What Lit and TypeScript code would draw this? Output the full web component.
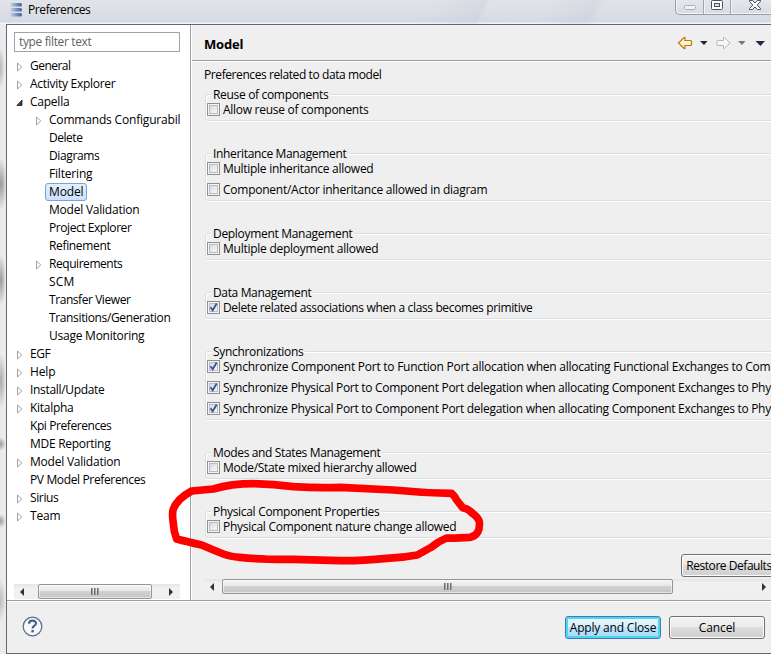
import { LitElement, html, css, svg, nothing } from "lit";
import { customElement, property } from "lit/decorators.js";
import { classMap } from "lit/directives/class-map.js";

type Text = [label: string, width: number];
interface Node { text: Text; arrow?: "closed" | "open"; child?: boolean; selected?: boolean }
interface Group { title: Text; checked: boolean; rows: Text[] }

const tree: Node[] = [
  { text: ["General", 40], arrow: "closed" },
  { text: ["Activity Explorer", 85], arrow: "closed" },
  { text: ["Capella", 39], arrow: "open" },
  { text: ["Commands Configurabil", 131], arrow: "closed", child: true },
  { text: ["Delete", 33], child: true },
  { text: ["Diagrams", 50], child: true },
  { text: ["Filtering", 43], child: true },
  { text: ["Model", 34], child: true, selected: true },
  { text: ["Model Validation", 90], child: true },
  { text: ["Project Explorer", 82], child: true },
  { text: ["Refinement", 61], child: true },
  { text: ["Requirements", 73], arrow: "closed", child: true },
  { text: ["SCM", 25], child: true },
  { text: ["Transfer Viewer", 81], child: true },
  { text: ["Transitions/Generation", 121], child: true },
  { text: ["Usage Monitoring", 95], child: true },
  { text: ["EGF", 20], arrow: "closed" },
  { text: ["Help", 25], arrow: "closed" },
  { text: ["Install/Update", 74], arrow: "closed" },
  { text: ["Kitalpha", 43], arrow: "closed" },
  { text: ["Kpi Preferences", 81] },
  { text: ["MDE Reporting", 80] },
  { text: ["Model Validation", 90], arrow: "closed" },
  { text: ["PV Model Preferences", 115] },
  { text: ["Sirius", 28], arrow: "closed" },
  { text: ["Team", 30], arrow: "closed" },
];

const groups: Group[] = [
  { title: ["Reuse of components", 115], checked: false, rows: [["Allow reuse of components", 145]] },
  {
    title: ["Inheritance Management", 133], checked: false,
    rows: [["Multiple inheritance allowed", 150], ["Component/Actor inheritance allowed in diagram", 264]],
  },
  { title: ["Deployment Management", 139], checked: false, rows: [["Multiple deployment allowed", 155]] },
  { title: ["Data Management", 98], checked: true, rows: [["Delete related associations when a class becomes primitive", 309]] },
  {
    title: ["Synchronizations", 90], checked: true,
    rows: [
      ["Synchronize Component Port to Function Port allocation when allocating Functional Exchanges to Com", 547],
      ["Synchronize Physical Port to Component Port delegation when allocating Component Exchanges to Phy", 547.5],
      ["Synchronize Physical Port to Component Port delegation when allocating Component Exchanges to Phy", 547.5],
    ],
  },
  { title: ["Modes and States Management", 167], checked: false, rows: [["Mode/State mixed hierarchy allowed", 193]] },
  { title: ["Physical Component Properties", 166], checked: false, rows: [["Physical Component nature change allowed", 233]] },
];

/** A single line of text whose tracking is adjusted to occupy a given width. */
@customElement("fit-text")
class FitText extends LitElement {
  @property() text = "";
  @property({ type: Number }) width = 0;
  static styles = css`
    :host { display: inline-block; white-space: pre; flex: none; }
    .t { display: inline-block; }
  `;
  render() { return html`<span class="t">${this.text}</span>`; }
  updated() {
    const el = this.renderRoot.querySelector<HTMLElement>(".t")!;
    el.style.letterSpacing = "0px";
    const natural = el.getBoundingClientRect().width;
    el.style.letterSpacing = `${(this.width + 0.4 - natural) / this.text.length}px`;
  }
}

const fit = ([label, width]: Text) => html`<fit-text .text=${label} .width=${width}></fit-text>`;

@customElement("scroll-bar")
class ScrollBar extends LitElement {
  static styles = css`
    :host { display: flex; height: 15px; background: linear-gradient(#e5e5e5, #f0f0f0 4px); }
    .end { box-sizing: border-box; flex: none; width: 18px; display: grid; place-items: center; }
    .end:first-child { padding-right: 3px; }
    .track { flex: 1; min-width: 0; display: flex; }
    .thumb { box-sizing: border-box; height: 15px; border: 1px solid #959595; border-radius: 2px;
      background: linear-gradient(#f5f5f5, #e7e7e8 46%, #d0d1d3 50%, #c5c6c8);
      box-shadow: inset 0 0 0 1px #ffffff88; display: flex; justify-content: center; align-items: center; gap: 1px; width: var(--thumb); margin-left: var(--lead, 0px); }
    .thumb i { width: 2px; height: 7px; background: linear-gradient(90deg, #555, #bbb); }
  `;
  render() {
    return html`
      <div class="end"><svg width="5" height="8"><path d="M5 0v8L1 4z" fill="#333"/></svg></div>
      <div class="track"><div class="thumb"><i></i><i></i><i></i></div></div>
      <div class="end"><svg width="5" height="8"><path d="M0 0v8L4 4z" fill="#333"/></svg></div>`;
  }
}

@customElement("app-root")
class AppRoot extends LitElement {
  static styles = css`
    :host { display: block; position: relative; width: 771px; height: 654px; overflow: hidden;
      font: 12px/18px "Open Sans", "Noto Sans", sans-serif; color: #000; background: #efefef; }
    * { box-sizing: border-box; }
    svg { display: block; }
    .frame { display: grid; grid-template: 24px 630px / 6px 765px; }
    .title { grid-column: 1 / 3; display: flex; justify-content: space-between; padding-left: 10px;
      background: linear-gradient(115deg, transparent 0 390px, #bfc2d344 440px, transparent 445px 500px, #bfc2d344 540px, transparent 550px),
        linear-gradient(#e0e3e7, #dedfe6 12px, #d5d8e5 22px, #f1f3f8 23px); }
    .name { display: flex; padding-top: 1px; gap: 6px; }
    .name svg { margin-top: 2px; flex: none; }
    .controls { width: 96px; height: 15px; display: flex; border: solid #989ba5; border-width: 0 0 1px 1px;
      border-radius: 0 0 0 5px; background: linear-gradient(#e5e7eb, #d9dbe1); box-shadow: inset 1px -1px #f4f5f8; }
    .edge { background:
        radial-gradient(ellipse 5px 22px at 0 44px, #b5b5b5, transparent),
        radial-gradient(ellipse 6px 26px at 1px 160px, #999, transparent),
        radial-gradient(ellipse 5px 25px at 1px 256px, #999, transparent),
        radial-gradient(ellipse 5px 28px at 1px 357px, #aaa, transparent),
        radial-gradient(ellipse 6px 7px at 0 420px, #999, transparent),
        radial-gradient(ellipse 6px 7px at 0 497px, #999, transparent),
        radial-gradient(ellipse 6px 22px at 0 576px, #bbb, transparent), #e9ebec; }
    .dialog { display: grid; grid-template: 575px 1fr / 184px 1fr; border: solid #65676d; border-width: 1px 0 1px 1px; min-width: 0; }
    .side { background: #fff; border-right: 1px solid #a0a0a0; padding: 7px 10px 0 7px; display: flex; flex-direction: column; }
    .filter { height: 20px; border: 1px solid #a1a2a9; padding-left: 4px; line-height: 18px; color: #636363; flex: none; }
    .tree { padding-top: 5px; height: 532px; }
    .node { display: flex; height: 18px; overflow: hidden; }
    .child { padding-left: 19px; }
    .arrow { width: 12px; padding: 5px 0 0 2px; flex: none; }
    .label { padding: 0 3px; height: 18px; border: 1px solid transparent; border-width: 0 1px; display: flex; line-height: 18px; }
    .selected { border: 1px solid #7da2ce; border-radius: 3px; background: linear-gradient(#e3effd, #cbe1fc); line-height: 16px; }
    .side scroll-bar { --thumb: 114px; --lead: 6px; }
    .main { border-left: 1px solid #fff; min-width: 0; overflow: hidden; display: flex; flex-direction: column; }
    .head { height: 36px; flex: none; border-bottom: 1px solid #a0a0a0; box-shadow: 0 1px #fff; display: flex;
      justify-content: space-between; align-items: center; padding: 2px 0 0 12px; }
    .head b { font-size: 13px; }
    .head svg { margin-top: -2px; }
    .intro { margin: 5px 0 0 12px; height: 28px; }
    .group { margin: 0 -2px 32px 13px; border: 1px solid #d5dfe5; border-radius: 3px; box-shadow: inset 1px 1px #fff, 0 1px #fff; padding: 0 0 4px 1px; flex: none; }
    .legend { height: 7px; display: flex; }
    .legend span { margin: -7px 0 0 4px; padding: 0 2px 0 2px; height: 14px; line-height: 14px; background: #efefef; }
    .rows { display: grid; gap: 8px; padding-top: 1px; }
    .row { display: flex; height: 13px; gap: 3px; line-height: 13px; }
    .row fit-text { height: 13px; }
    .box { width: 13px; height: 13px; flex: none; border: 1px solid #8e8f8f; background: linear-gradient(135deg, #cbcfd5, #f6f6f6 75%);
      box-shadow: inset 0 0 0 1px #f4f4f4, inset 0 0 0 2px #b8bdc4; }
    .restore { margin: -16px 0 0 489px; }
    .main scroll-bar { margin: 2px -2px 0 12px; flex: none; --thumb: 451px; }
    .button { display: flex; justify-content: center; width: 96px; height: 23px; line-height: 22px; border: 1px solid #707070; border-radius: 3px;
      background: linear-gradient(#f2f2f2, #ebebeb 48%, #dddddd 50%, #cfcfcf); box-shadow: inset 0 0 0 1px #fcfcfc; flex: none; }
    .default { border-color: #3c7fb1; box-shadow: inset 0 0 0 2px #4fd4f8; background: linear-gradient(#eaf6fd, #d9f0fc 48%, #bee6fd 50%, #a7d9f5); }
    .foot { grid-column: 1 / 3; border-top: 1px solid #a0a0a0; box-shadow: inset 0 1px #fff; display: flex; gap: 8px; padding: 15px 6px 0 15px; }
    .foot .help { margin-right: auto; }
    .mark { position: absolute; left: 160px; top: 440px; pointer-events: none; }
  `;

  private node(n: Node) {
    return html`<div class=${classMap({ node: true, child: !!n.child })}>
      <div class="arrow">${n.arrow === "closed"
        ? html`<svg width="8" height="10"><path d="M1.5 1v8l4.3-4z" fill="#fff" stroke="#a3a3a3"/></svg>`
        : n.arrow === "open"
          ? html`<svg width="8" height="9"><path d="M6 2v5.5H.8z" fill="#404040" stroke="#222" stroke-width=".8"/></svg>`
          : nothing}</div>
      <div class=${classMap({ label: true, selected: !!n.selected })}>${fit(n.text)}</div>
    </div>`;
  }

  private group(g: Group) {
    return html`<section class="group">
      <div class="legend"><span>${fit(g.title)}</span></div>
      <div class="rows">${g.rows.map((r) => html`<div class="row">
        <div class="box">${g.checked
          ? html`<svg width="11" height="11"><path d="M2.5 5.2l2.2 3L8.7 1.6" fill="none" stroke="#4054a0" stroke-width="1.9"/></svg>`
          : nothing}</div>${fit(r)}</div>`)}</div>
    </section>`;
  }

  render() {
    return html`<div class="frame">
      <header class="title">
        <div class="name">
          <svg width="12" height="15"><defs><linearGradient id="bar"><stop stop-color="#cfd8ea"/><stop offset=".5" stop-color="#7f97c6"/><stop offset="1" stop-color="#4a629a"/></linearGradient></defs>
            ${[0, 5, 10].map((y) => svg`<rect y=${y} width="12" height="3.500" rx="1.5" fill="url(#bar)"/>`)}</svg>
          ${fit(["Preferences", 62])}
        </div>
        <div class="controls"><svg width="95" height="14">
          <path d="M27.5 0v14M54.5 0v14" stroke="#a2a5af"/><path d="M28.5 0v14M55.5 0v14" stroke="#f1f2f5"/>
          <rect x="8.5" y="5.5" width="11" height="4" rx="1" fill="#f3f3f3" stroke="#adb0b8"/>
          <rect x="35.5" y=".5" width="11" height="9" rx="1" fill="#fff" stroke="#4d505d"/><rect x="38.5" y="3.5" width="5" height="3" fill="#dfe0e5" stroke="#4d505d"/>
          <path d="M73.5.5h3.2L79 3l2.3-2.5h3.2v1L81.2 5l3.3 3.5v1h-3.2L79 7l-2.3 2.5h-3.2v-1L76.8 5l-3.3-3.5z" fill="#fff" stroke="#4d505d"/>
        </svg></div>
      </header>
      <div class="edge"></div>
      <div class="dialog">
        <aside class="side">
          <div class="filter">${fit(["type filter text", 72])}</div>
          <div class="tree">${tree.map((n) => this.node(n))}</div>
          <scroll-bar></scroll-bar>
        </aside>
        <main class="main">
          <div class="head"><b>${fit(["Model", 39])}</b>
            <svg width="95" height="18"><defs><linearGradient id="gold" x2="0" y2="1"><stop stop-color="#fff"/><stop offset="1" stop-color="#ffe69a"/></linearGradient></defs>
              <path d="M2.500 9l5.500-5.500H9v3h5.500q1 0 1 1v3q0 1-1 1H9v3H8z" fill="url(#gold)" stroke="#b87a10" stroke-width="1.2"/>
              <path d="M24 7h7.500l-3.500 4z" fill="#222"/>
              <path d="M54 9l-5.500-5.500H47.500v3H42q-1 0-1 1v3q0 1 1 1h5.500v3h1z" fill="#f8f8f8" stroke="#b5b5b5"/>
              <path d="M62 7h7.500l-3.500 4z" fill="#777"/>
              <path d="M79.500 7h9.500l-4.500 5z" fill="#35204e"/></svg>
          </div>
          <div class="intro">${fit(["Preferences related to data model", 177])}</div>
          ${groups.map((g) => this.group(g))}
          <div class="button restore">${fit(["Restore Defaults", 85])}</div>
          <scroll-bar></scroll-bar>
        </main>
        <footer class="foot">
          <svg class="help" width="21" height="21"><circle cx="10.500" cy="10.500" r="9.300" fill="#f7f8fa" stroke="#5c6f91" stroke-width="1.300"/>
            <path d="M7 7.800C7 3.400 14.200 3.600 14 7.500C13.900 9.800 10.600 9.700 10.600 12.400" fill="none" stroke="#4d6188" stroke-width="2.200"/><rect x="9.400" y="14" width="2.400" height="2.400" fill="#4d6188"/></svg>
          <div class="button default">${fit(["Apply and Close", 86])}</div>
          <div class="button">${fit(["Cancel", 36])}</div>
        </footer>
      </div>
    </div>
    <svg class="mark" width="340" height="130" viewBox="0 0 1020 390">
      <path d="M95 153L160 147Q215 131 280 131Q340 133 400 140Q470 144 540 142L700 150Q790 159 875 160Q884 168 890 180L908 203Q926 206 935 218Q956 234 958 245Q960 264 953 277Q945 290 930 292Q885 295 860 294Q835 304 815 321L772 345Q730 353 680 355Q600 363 540 362Q470 360 400 358Q300 359 240 352Q210 350 190 342Q155 328 125 315Q80 305 50 297Q41 275 40 250Q36 225 39 210Q50 177 95 153Z" fill="none" stroke="#f00" stroke-width="23" stroke-linejoin="round"/>
    </svg>`;
  }
}
